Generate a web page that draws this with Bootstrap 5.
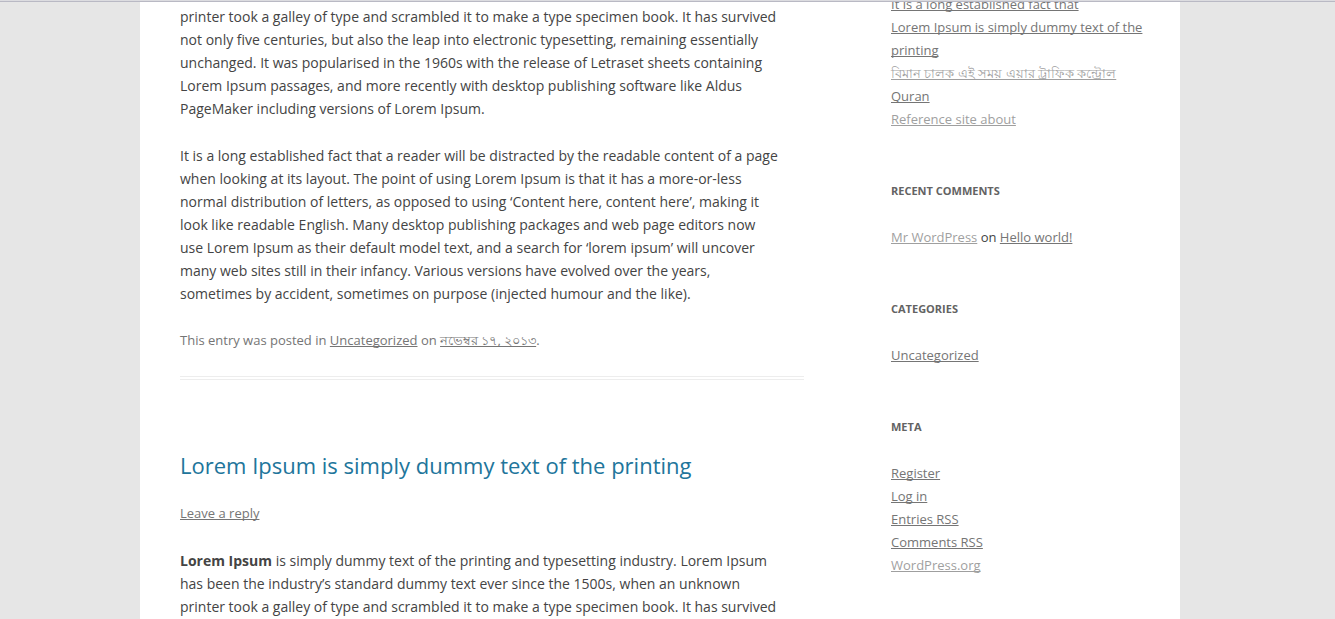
<!DOCTYPE html>
<html lang="en">
<head>
<meta charset="utf-8">
<meta name="viewport" content="width=device-width, initial-scale=1">
<title>Blog</title>
<link href="https://cdn.jsdelivr.net/npm/bootstrap@5.3.0/dist/css/bootstrap.min.css" rel="stylesheet">
<style>
body { background: #e6e6e6; color: #444; font-family: "Open Sans", sans-serif; font-size: 14px; line-height: 23px; overflow: hidden; height: 100vh; }
.top-line { height: 2px; background: #b9b9c4; border-top: 1px solid #dcdce0; }
.site { max-width: 1040px; min-height: 100vh; padding: 0 40px; margin-left: 140px; gap: 87px; }
.main-col { flex: 0 0 65%; padding-top: 5px; }
.side-col { font-size: 13px; margin-top: -7px; }
.main-col p { margin-bottom: 24px; }
a { color: #757575; text-decoration-skip-ink: none; }
a.seen { color: #9f9f9f; }
.meta-line { font-size: 13px; color: #757575; }
.post { border-bottom: 4px double #ededed; padding-bottom: 24px; margin-bottom: 72px; }
.post-title { font-size: 22px; line-height: 27px; font-weight: 400; margin-bottom: 23px; }
.post-title a { color: #21759b; text-decoration: none; }
.widget { margin-bottom: 48px; }
.widget h2 { font-size: 11px; line-height: 24px; font-weight: 700; color: #636363; text-transform: uppercase; margin-bottom: 23px; }
</style>
</head>
<body>
<div class="top-line fixed-top"></div>
<div class="site bg-white d-flex">
<main class="main-col">
<article class="post">
<p>printer took a galley of type and scrambled it to make a type specimen book. It has survived<br>
not only five centuries, but also the leap into electronic typesetting, remaining essentially<br>
unchanged. It was popularised in the 1960s with the release of Letraset sheets containing<br>
Lorem Ipsum passages, and more recently with desktop publishing software like Aldus<br>
PageMaker including versions of Lorem Ipsum.</p>
<p>It is a long established fact that a reader will be distracted by the readable content of a page<br>
when looking at its layout. The point of using Lorem Ipsum is that it has a more-or-less<br>
normal distribution of letters, as opposed to using ‘Content here, content here’, making it<br>
look like readable English. Many desktop publishing packages and web page editors now<br>
use Lorem Ipsum as their default model text, and a search for ‘lorem ipsum’ will uncover<br>
many web sites still in their infancy. Various versions have evolved over the years,<br>
sometimes by accident, sometimes on purpose (injected humour and the like).</p>
<footer class="meta-line">This entry was posted in <a href="#">Uncategorized</a> on <a href="#">নভেম্বর ১৭, ২০১৩</a>.</footer>
</article>
<article>
<h1 class="post-title"><a href="#">Lorem Ipsum is simply dummy text of the printing</a></h1>
<p class="meta-line"><a href="#">Leave a reply</a></p>
<p><strong>Lorem Ipsum</strong> is simply dummy text of the printing and typesetting industry. Lorem Ipsum<br>
has been the industry’s standard dummy text ever since the 1500s, when an unknown<br>
printer took a galley of type and scrambled it to make a type specimen book. It has survived</p>
</article>
</main>
<aside class="side-col text-nowrap">
<section class="widget"><ul class="list-unstyled mb-0">
<li><a href="#">It is a long established fact that</a></li>
<li><a href="#">Lorem Ipsum is simply dummy text of the<br>printing</a></li>
<li><a class="seen" href="#">বিমান চালক এই সময় এয়ার ট্রাফিক কন্ট্রোল</a></li>
<li><a href="#">Quran</a></li>
<li><a class="seen" href="#">Reference site about</a></li>
</ul></section>
<section class="widget"><h2>Recent Comments</h2><ul class="list-unstyled mb-0">
<li><a class="seen" href="#">Mr WordPress</a> on <a href="#">Hello world!</a></li>
</ul></section>
<section class="widget"><h2>Categories</h2><ul class="list-unstyled mb-0">
<li><a href="#">Uncategorized</a></li>
</ul></section>
<section class="widget"><h2>Meta</h2><ul class="list-unstyled mb-0">
<li><a href="#">Register</a></li>
<li><a href="#">Log in</a></li>
<li><a href="#">Entries RSS</a></li>
<li><a href="#">Comments RSS</a></li>
<li><a class="seen" href="#">WordPress.org</a></li>
</ul></section>
</aside>
</div>
<script src="https://cdn.jsdelivr.net/npm/bootstrap@5.3.0/dist/js/bootstrap.bundle.min.js"></script>
</body>
</html>
